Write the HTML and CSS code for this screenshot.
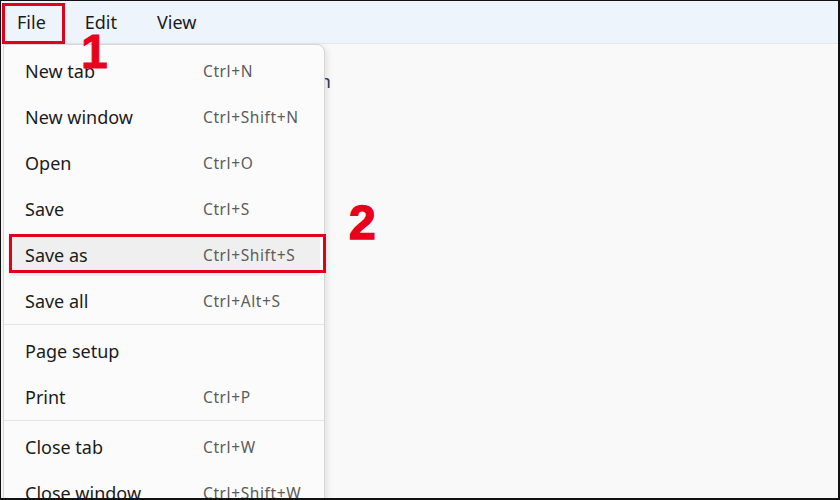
FILE: index.html
```html
<!DOCTYPE html>
<html>
<head>
<meta charset="utf-8">
<link rel="stylesheet" href="styles.css">
</head>
<body>
<div class="frame">
  <div class="menubar">
    <div class="mb-item mb-file">File</div>
    <div class="mb-item mb-edit">Edit</div>
    <div class="mb-item mb-view">View</div>
  </div>
  <div class="content">
    <div class="doc-line">This is a sample text written in Notepad, written in</div>
  </div>

  <div class="menu">
    <div class="item"><span class="label">New tab</span><span class="key">Ctrl+N</span></div>
    <div class="item"><span class="label">New window</span><span class="key">Ctrl+Shift+N</span></div>
    <div class="item"><span class="label">Open</span><span class="key">Ctrl+O</span></div>
    <div class="item"><span class="label">Save</span><span class="key">Ctrl+S</span></div>
    <div class="item active"><span class="label">Save as</span><span class="key">Ctrl+Shift+S</span></div>
    <div class="item"><span class="label">Save all</span><span class="key">Ctrl+Alt+S</span></div>
    <div class="sep"></div>
    <div class="item"><span class="label">Page setup</span><span class="key"></span></div>
    <div class="item"><span class="label">Print</span><span class="key">Ctrl+P</span></div>
    <div class="sep"></div>
    <div class="item"><span class="label">Close tab</span><span class="key">Ctrl+W</span></div>
    <div class="item"><span class="label">Close window</span><span class="key">Ctrl+Shift+W</span></div>
  </div>

  <div class="mark mark-file"></div>
  <div class="mark mark-saveas"></div>
  <div class="num num-1">1</div>
  <div class="num num-2">2</div>
</div>
</body>
</html>
```

FILE: styles.css
```css
html, body {
  margin: 0;
  padding: 0;
  width: 840px;
  height: 500px;
  overflow: hidden;
  background: #000;
}
.frame {
  position: relative;
  box-sizing: border-box;
  width: 840px;
  height: 500px;
  border-top: 1px solid #111;
  border-left: 1px solid #111;
  border-right: 2px solid #111;
  border-bottom: 2px solid #111;
  background: #f9f9f9;
  display: flex;
  flex-direction: column;
  overflow: hidden;
  font-family: "Noto Sans", "Open Sans", sans-serif;
  color: #1b1b1b;
}
.menubar {
  height: 42px;
  flex: none;
  background: #eef4fc;
  border-bottom: 1px solid #e2e8f0;
  display: flex;
  align-items: center;
  font-size: 18px;
}
.mb-item {
  line-height: 42px;
}
.mb-file { margin-left: 16px; }
.mb-edit { margin-left: 39px; }
.mb-view { margin-left: 40px; }
.content {
  flex: 1;
  background: #f9f9f9;
  padding-top: 25px;
}
.doc-line {
  margin-left: 12px;
  width: 318px;
  text-align: right;
  white-space: nowrap;
  overflow: hidden;
  direction: rtl;
  font-size: 18px;
  color: #2b3a55;
}
.menu {
  position: absolute;
  left: 2px;
  top: 43px;
  width: 322px;
  height: 480px;
  box-sizing: border-box;
  padding-top: 3px;
  background: #fbfbfb;
  border: 1px solid #d6d6d6;
  border-top-right-radius: 8px;
  box-shadow: 2px 2px 6px rgba(0,0,0,0.10);
  display: flex;
  flex-direction: column;
}
.item {
  height: 46px;
  flex: none;
  display: flex;
  align-items: center;
  padding-left: 17px;
  margin: 0 4px;
  border-radius: 4px;
}
.item.active {
  background: #efefef;
  margin: 2px 4px;
  height: 42px;
}
.label {
  width: 178px;
  font-size: 18px;
  color: #1b1b1b;
}
.key {
  font-size: 15.5px;
  letter-spacing: 0.6px;
  color: #5c5c5c;
}
.sep {
  flex: none;
  box-sizing: border-box;
  border-top: 1px solid #e5e5e5;
  height: 4px;
}
.mark {
  position: absolute;
  border: 3px solid #e00019;
  box-sizing: border-box;
}
.mark-file {
  left: 1px;
  top: 2px;
  width: 63px;
  height: 41px;
}
.mark-saveas {
  left: 8px;
  top: 233px;
  width: 317px;
  height: 39px;
}
.num {
  position: absolute;
  font-family: "Liberation Sans", Arial, sans-serif;
  font-weight: 900;
  color: #e8001c;
  line-height: 1;
}
.num-1 {
  left: 80px;
  top: 27px;
  font-size: 48px;
  -webkit-text-stroke: 1px #e8001c;
}
.num-2 {
  left: 348px;
  top: 198px;
  font-size: 48px;
  -webkit-text-stroke: 1.5px #e8001c;
}
```
